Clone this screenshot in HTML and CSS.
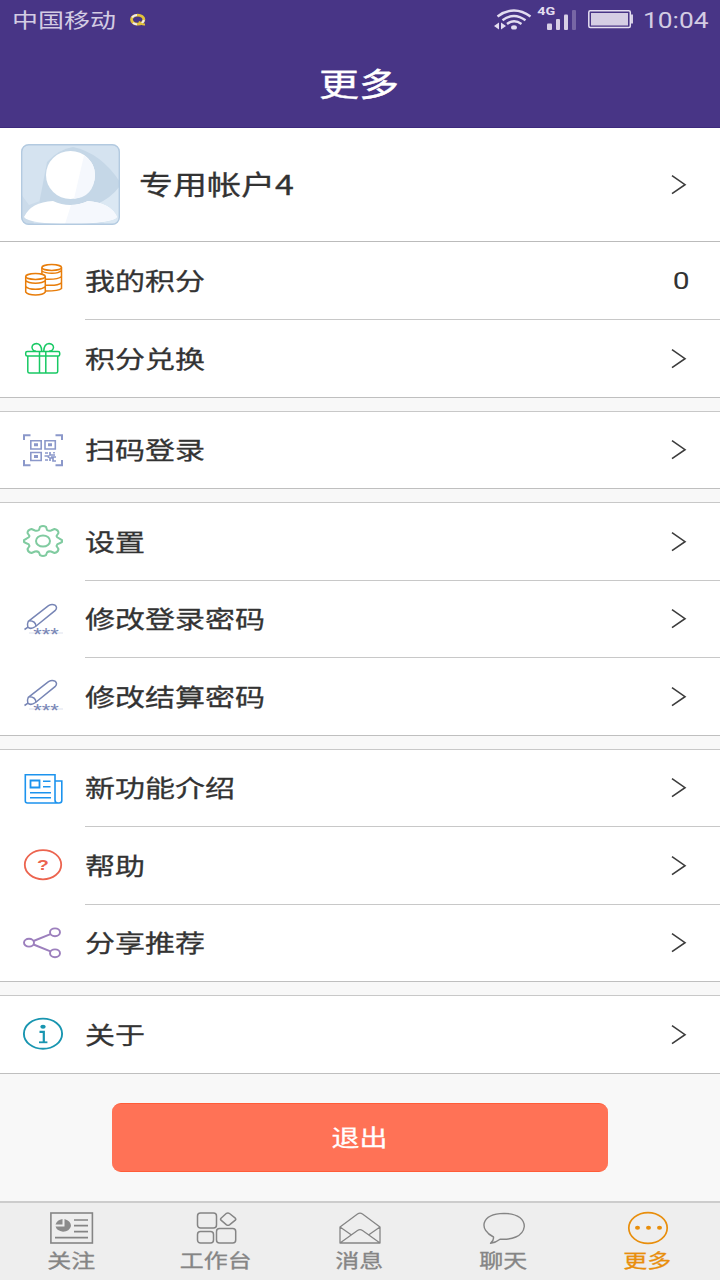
FILE: index.html
```html
<!DOCTYPE html>
<html lang="zh-CN">
<head>
<meta charset="utf-8">
<title>更多</title>
<link rel="stylesheet" href="styles.css">
</head>
<body>
<svg class="defs" width="0" height="0">
  <symbol id="chevron" viewBox="0 0 16 20"><path d="M1 .7 14 9.700 1 18.700" fill="none" stroke="#3c3c3c" stroke-width="1.600"/></symbol>
  <symbol id="pencil" viewBox="0 0 44 36">
    <g fill="none" stroke="#7785b5" stroke-width="1.500">
      <path d="M7.300 19.300 27.500 3.600Q31 1.500 34 3.200 37 5.500 34 8.700L14.500 24.500Q9.500 28 6.800 25 5.800 22.500 7.300 19.300Z"/>
      <path d="M8.200 18.800Q14.600 18.800 15 24.200M7 25.200 3.500 27.500"/>
    </g>
    <path d="M8 31H42" stroke="#dde1ed" stroke-width="1"/>
    <text transform="translate(12.300 38.600) scale(1.250 1)" font-family="Liberation Sans" font-size="17.500" fill="#7785b5">***</text>
  </symbol>
</svg>
<div class="screen">
  <header class="header">
    <div class="status">
      <div class="status-left">
        <span class="carrier">中国移动</span>
        <svg width="18" height="14" viewBox="0 0 18 14" fill="none"><ellipse cx="8.700" cy="6.600" rx="6.200" ry="4.500" stroke="#e2c23a" stroke-width="2.800"/><path d="M3 4.400Q5 2 8 2M4 10Q6 11.500 8 11.200M12.500 10.500Q14.500 9 14.800 7" stroke="#eee9f4" stroke-width="2"/><path d="M10 8.500Q12 11.800 16 11.500" stroke="#e2c23a" stroke-width="2"/></svg>
      </div>
      <div class="status-right">
        <svg width="140" height="28" viewBox="494 4 140 28">
          <g fill="none" stroke="#e3ddf0" stroke-width="2.400"><path d="M497.500 16.500Q514 4.500 530.500 16.500M502.500 20.300Q514 11.500 525.500 20.300M507 24Q514 18.500 521.500 24"/></g>
          <ellipse cx="514" cy="27.400" rx="2.900" ry="2.200" fill="#e3ddf0"/>
          <path d="M494 26 499 22.500V29.500ZM501 22.500 506 26 501 29.500Z" fill="#e3ddf0"/>
          <text class="net" transform="translate(537.300 14.500) scale(1.300 1)">4G</text>
          <g fill="#d8d0e6"><rect x="547" y="23.500" width="5" height="6.500" rx="1"/><rect x="556" y="19" width="4" height="11" rx="1"/><rect x="564" y="14.500" width="4" height="15.500" rx="1"/><rect x="572" y="10" width="4" height="20" rx="1" fill="#7766a5"/></g>
          <rect x="588.800" y="10.800" width="41.500" height="16.800" rx="1.500" fill="none" stroke="#e5dff1" stroke-width="1.500"/>
          <rect x="591" y="13" width="37" height="12.500" fill="#d5cee4"/><path d="M631 14.500h2v9h-2z" fill="#d5cee4"/>
        </svg>
        <span class="clock">10:04</span>
      </div>
    </div>
    <h1 class="title"><span class="wide-c">更多</span></h1>
  </header>

  <main class="content">
    <section class="profile">
      <svg class="avatar" width="99" height="81" viewBox="0 0 99 81">
        <defs><clipPath id="frame"><rect x=".5" y=".5" width="98" height="80" rx="7"/></clipPath></defs>
        <g clip-path="url(#frame)">
          <path fill="#d5e3f0" d="M0 0h99v81H0z"/>
          <path fill="#c5d7e7" d="M26 18Q38 5 52 3 80 9 99 38V52Q90 60 82 66L18 60Z"/>
          <path fill="#cbdbea" d="M0 50 8 61 19 57 12 81H0Z"/>
          <path fill="#dbe8f3" d="M99 42V81H84L76 60Q90 54 99 42Z"/>
          <path fill="#fff" d="M3 73Q10 58 32 57 49 65 67 57 90 59 96 73 92 79 50 80 8 80 3 73Z"/>
          <path fill="#f5f8fd" d="M50 61Q59 61 67 57 90 59 96 73 92 79 44 80Z"/>
        </g>
        <ellipse cx="49.500" cy="31" rx="24.500" ry="24" fill="#fff"/>
        <path fill="#f5f8fd" d="M63 11.500Q74 18.500 74 31 73 53 53 54.800Z"/>
        <rect x=".7" y=".7" width="97.600" height="79.600" rx="7" fill="none" stroke="#b3cae0" stroke-width="1.400"/>
      </svg>
      <span class="name">专用帐户4</span>
      <svg class="chev"><use href="#chevron"/></svg>
    </section>

    <section class="group first">
      <div class="row tall">
        <svg class="icon" viewBox="0 0 44 36" fill="none" stroke="#e87d0a" stroke-width="1.500">
          <ellipse cx="30.700" cy="5.500" rx="9.800" ry="2.900"/><path d="M20.900 5.500V12M40.500 5.500V26.500Q38 29 25 29M24 17.200Q37 17.800 40.500 14.500M25 23.200Q37 24 40.500 20.700M20.900 9Q24 11.300 31 11.300 38 11.300 40.500 8.500"/>
          <ellipse cx="14.500" cy="14.500" rx="9.800" ry="2.900"/><path d="M4.700 14.500V30Q7 33 14.500 33T24.300 30V14.500M4.700 18.600Q7 21.200 14.500 21.200T24.300 18.600M4.700 24.500Q7 27.300 14.500 27.300T24.300 24.500"/>
        </svg>
        <div class="body"><span class="label">我的积分</span><span class="points">0</span></div>
      </div>
      <div class="row tall last">
        <svg class="icon" viewBox="0 0 44 36" fill="none" stroke="#18c964" stroke-width="1.500">
          <rect x="4.700" y="11.500" width="34" height="4.600" rx="1.500"/><path d="M6.800 16V31.500Q6.800 33 8.500 33H35Q36.700 33 36.700 31.500V16M18.500 11.500V33M24.800 11.500V33"/>
          <path d="M20.700 11Q20.500 4 15.500 3.500 11 4.200 11 7.500 11.500 11 15 11.200M22.800 11Q23 4 28 3.500 32.500 4.200 32.500 7.500 32 11 28 11.200"/>
        </svg>
        <div class="body"><span class="label">积分兑换</span><svg class="chev"><use href="#chevron"/></svg></div>
      </div>
    </section>

    <section class="group">
      <div class="row last">
        <svg class="icon" viewBox="0 0 44 36" fill="none" stroke="#8b98ca">
          <path stroke-width="2" d="M3 8V3.200H9.500M34.500 3.200H41V8M3 28V33.300H9.500M34.500 33.300H41V28"/>
          <path stroke-width="1.600" d="M9.800 8.700H20.200V17H9.800ZM24 8.700H34.300V17H24ZM9.800 20.500H20.200V28.500H9.800Z"/>
          <path fill="#8b98ca" stroke="none" d="M13 11.300h4v3h-4zM27 11.300h4v3h-4zM13 23h4v3h-4z"/>
          <path stroke-width="1.700" d="M24 21h3M29 20v3h5M23.500 24h4v2M30 25h5M24 28h3M29 29v-3h3v3h3M33 20v1.500"/>
        </svg>
        <div class="body"><span class="label">扫码登录</span><svg class="chev"><use href="#chevron"/></svg></div>
      </div>
    </section>

    <section class="group">
      <div class="row tall">
        <svg class="icon" viewBox="0 0 44 36" fill="none" stroke="#80cba0" stroke-width="2" stroke-linejoin="round">
          <path d="M19 3.800Q22 2 25 3.800L26 7Q28 8.200 30 7.500L33.500 6Q37.500 7 37.500 10L35.500 13Q36 15 38 15.300L41 17.200V19L38 20.600Q36 21 35.500 23L37.500 26Q37 29.500 33.500 30L30 28.500Q27.500 28 26 29.500L25 32.200Q22 34 19 32.200L18 29.500Q16.500 28 14 28.500L10.500 30Q7 29.500 6.500 26L8.500 23Q8 21 6 20.600L3 19V17.200L6 15.300Q8 15 8.500 13L6.500 10Q6.500 7 10.500 6L14 7.500Q16 8.200 18 7Z"/>
          <ellipse cx="22" cy="18" rx="7" ry="5.600"/>
        </svg>
        <div class="body"><span class="label">设置</span><svg class="chev"><use href="#chevron"/></svg></div>
      </div>
      <div class="row">
        <svg class="icon"><use href="#pencil"/></svg>
        <div class="body"><span class="label">修改登录密码</span><svg class="chev"><use href="#chevron"/></svg></div>
      </div>
      <div class="row tall last">
        <svg class="icon"><use href="#pencil"/></svg>
        <div class="body"><span class="label">修改结算密码</span><svg class="chev"><use href="#chevron"/></svg></div>
      </div>
    </section>

    <section class="group">
      <div class="row">
        <svg class="icon" viewBox="0 0 44 36" fill="none" stroke="#1c93ee" stroke-width="1.600">
          <path d="M34 10V3.700H4.300V30Q4.300 32 6.500 32H38Q40.800 32 40.800 29.500V10H34V29Q34 32 37 32"/>
          <path stroke-width="1.800" d="M9.500 9.500H18.500V16.500H9.500Z"/><path d="M22 10.200H29.500M22 15.800H29.500M9 21.800H30M9 26.800H30"/>
        </svg>
        <div class="body"><span class="label">新功能介绍</span><svg class="chev"><use href="#chevron"/></svg></div>
      </div>
      <div class="row tall">
        <svg class="icon" viewBox="0 0 44 36">
          <ellipse cx="22" cy="17.700" rx="18.200" ry="14.600" fill="none" stroke="#ec644f" stroke-width="1.800"/>
          <text transform="translate(22 23.300) scale(1.250 1)" text-anchor="middle" font-family="Liberation Sans" font-weight="bold" font-size="15.500" fill="#ec644f">?</text>
        </svg>
        <div class="body"><span class="label">帮助</span><svg class="chev"><use href="#chevron"/></svg></div>
      </div>
      <div class="row last">
        <svg class="icon" viewBox="0 0 44 36" fill="none" stroke="#9c7fbd" stroke-width="1.900">
          <ellipse cx="8" cy="17.700" rx="5" ry="3.900"/><ellipse cx="34" cy="7.300" rx="5" ry="3.900"/><ellipse cx="34" cy="28.300" rx="5" ry="3.900"/><path d="M12.500 16 29.500 9.200M12.500 19.500 29.500 26.400"/>
        </svg>
        <div class="body"><span class="label">分享推荐</span><svg class="chev"><use href="#chevron"/></svg></div>
      </div>
    </section>

    <section class="group">
      <div class="row tall last">
        <svg class="icon" viewBox="0 0 44 36">
          <ellipse cx="22" cy="17.700" rx="19.100" ry="15.100" fill="none" stroke="#1895b0" stroke-width="1.900"/>
          <ellipse cx="22" cy="10.800" rx="2.700" ry="2" fill="#1895b0"/>
          <path d="M18.500 15.800H22.800V26" fill="none" stroke="#1895b0" stroke-width="2.200"/><path d="M18 26.300H26.400" stroke="#1895b0" stroke-width="1.800"/>
        </svg>
        <div class="body"><span class="label">关于</span><svg class="chev"><use href="#chevron"/></svg></div>
      </div>
    </section>

    <button class="logout"><span class="wide-c">退出</span></button>
  </main>

  <nav class="tabs">
    <div class="tab">
      <svg width="46" height="36" viewBox="0 0 46 36" fill="none" stroke="#858585"><rect x="1.900" y="3" width="41.500" height="30" stroke-width="1.600"/><path d="M25 10H39M25 15.700H39M25 21.700H39M6 27.700H39" stroke-width="1.700"/><path d="M15.500 9Q22 11 22 16 20.500 21.700 14 21.700 8 21 6.500 16.500H15.500Z" fill="#8b8b8b" stroke="none"/><path d="M6.500 14.500Q8 9.800 13.500 9V14.500Z" fill="#8b8b8b" stroke="none"/></svg>
      <span class="tab-label">关注</span>
    </div>
    <div class="tab">
      <svg width="46" height="36" viewBox="0 0 46 36" fill="none" stroke="#858585" stroke-width="1.500"><rect x="4.500" y="2.900" width="19" height="15.200" rx="3"/><rect x="4.500" y="21.500" width="16" height="11.500" rx="3"/><rect x="23.500" y="18.400" width="19.200" height="14.600" rx="3"/><path stroke-linejoin="round" d="M33.500 3.300Q35 2.400 36.500 3.500L42.300 8.200Q43.300 9.200 42.300 10.200L36.500 14.800Q35 15.700 33.500 14.800L28 10.200Q27 9.200 28 8.200Z"/></svg>
      <span class="tab-label">工作台</span>
    </div>
    <div class="tab">
      <svg width="46" height="36" viewBox="0 0 46 36" fill="none" stroke="#858585" stroke-width="1.300" stroke-linejoin="round"><path d="M3 17 20.500 4Q23 2.300 25.500 4L43 17V33H3ZM3 17 14.500 25M43 17 31.500 25M3 33 20.500 20.500Q23 18.800 25.500 20.500L43 33"/></svg>
      <span class="tab-label">消息</span>
    </div>
    <div class="tab">
      <svg width="46" height="36" viewBox="0 0 46 36" fill="none" stroke="#858585" stroke-width="1.400" stroke-linejoin="round"><path d="M12.500 27C-2 20-1 4 23 3.400 38 3.500 43.300 10 43.300 16.500 42 27 30 29.800 19 29.200Q15 32.500 9.500 33.200 13 30.500 12.500 27Z"/></svg>
      <span class="tab-label">聊天</span>
    </div>
    <div class="tab active">
      <svg width="46" height="36" viewBox="0 0 46 36"><ellipse cx="23" cy="18" rx="19.200" ry="15.300" fill="none" stroke="#e88e0c" stroke-width="1.700"/><g fill="#e88e0c"><ellipse cx="12.500" cy="17.800" rx="2.500" ry="2"/><ellipse cx="23.500" cy="17.800" rx="2.500" ry="2"/><ellipse cx="34.500" cy="17.800" rx="2.500" ry="2"/></g></svg>
      <span class="tab-label">更多</span>
    </div>
  </nav>
</div>
</body>
</html>
```
FILE: styles.css
```css
* { box-sizing: border-box; }
body { margin: 0; font-family: "Noto Sans CJK SC", sans-serif; color: #333; }
.defs { display: none; }
svg { display: block; flex: none; }
.screen { width: 720px; height: 1280px; display: flex; flex-direction: column; background: #f8f8f8; overflow: hidden; }

.header { height: 128px; background: #483586; border-bottom: 1px solid #3d2a7d; color: #fff; flex: none; }
.status { height: 40px; display: flex; justify-content: space-between; align-items: center; padding: 0 12px; color: #d3cce3; }
.status-left { display: flex; align-items: center; gap: 12px; }
.carrier { width: 105px; margin-top: -3px; font-size: 20.800px; line-height: 40px; white-space: nowrap; transform: scaleX(1.25); transform-origin: left; }
.status-right { display: flex; align-items: center; gap: 9px; }
.status-right svg { margin-top: -4px; }
.clock { width: 65px; font-family: Roboto, sans-serif; font-size: 22.500px; line-height: 40px; white-space: nowrap; transform: scaleX(1.170); transform-origin: left; }
.net { font-family: Roboto, sans-serif; font-weight: 700; font-size: 11px; fill: #e3ddf0; }
.title { margin: 0 2px 0 0; height: 85px; display: flex; justify-content: center; align-items: center; font-size: 32px; font-weight: 400; line-height: 85px; -webkit-text-stroke: .4px; }
.wide-c { display: block; transform: scaleX(1.25); }

.content { flex: 1; display: flex; flex-direction: column; align-items: stretch; }
.profile { height: 114px; padding: 0 33px 0 21px; display: flex; align-items: center; background: #fff; border-bottom: 1px solid #bbb; }
.name { margin: -4px auto 0 19px; font-size: 27.200px; white-space: nowrap; transform: scaleX(1.25); transform-origin: left; -webkit-text-stroke: .3px; }
.chev { width: 16px; height: 20px; }

.group { background: #fff; border-top: 1px solid #c8c8c8; margin-bottom: 13px; }
.group.first { border-top: 0; }
.row { height: 77px; display: flex; align-items: stretch; }
.row.tall { height: 78px; }
.row.last { border-bottom: 1px solid #bfbfbf; }
.icon { width: 44px; height: 36px; margin: auto 20px auto 21px; }
.row.tall .icon { margin-top: 20px; }
.body { flex: 1; display: flex; justify-content: space-between; align-items: center; padding-right: 33px; border-bottom: 1px solid #c8c8c8; }
.row.last .body { border-bottom: 0; }
.label { margin: -2px 0 0 -.5px; font-size: 24px; line-height: 36px; white-space: nowrap; transform: scaleX(1.25); transform-origin: left; -webkit-text-stroke: .3px; }
.points { font-family: Roboto, sans-serif; font-size: 24px; margin-right: -2px; transform: scaleX(1.25); transform-origin: right; }

.logout { width: 496px; height: 69px; margin: 16px auto 0; padding: 0 1px 3px 0; display: flex; align-items: center; justify-content: center; border: 0; border-top: 1px solid #ff5c38; border-bottom: 1px solid #ff5c38; border-radius: 9px; background: #ff7256; color: #fff; font: 400 22.400px "Noto Sans CJK SC", sans-serif; -webkit-text-stroke: .3px; }

.tabs { height: 79px; flex: none; display: grid; grid-template-columns: repeat(5, 1fr); background: #eee; border-top: 2px solid #ccc; }
.tab { display: flex; flex-direction: column; align-items: center; padding-top: 7px; color: #858585; }
.tab-label { margin-right: 1px; font-size: 19.200px; line-height: 28px; white-space: nowrap; transform: scaleX(1.25); -webkit-text-stroke: .3px; }
.tab.active { color: #e88e0c; }
```
